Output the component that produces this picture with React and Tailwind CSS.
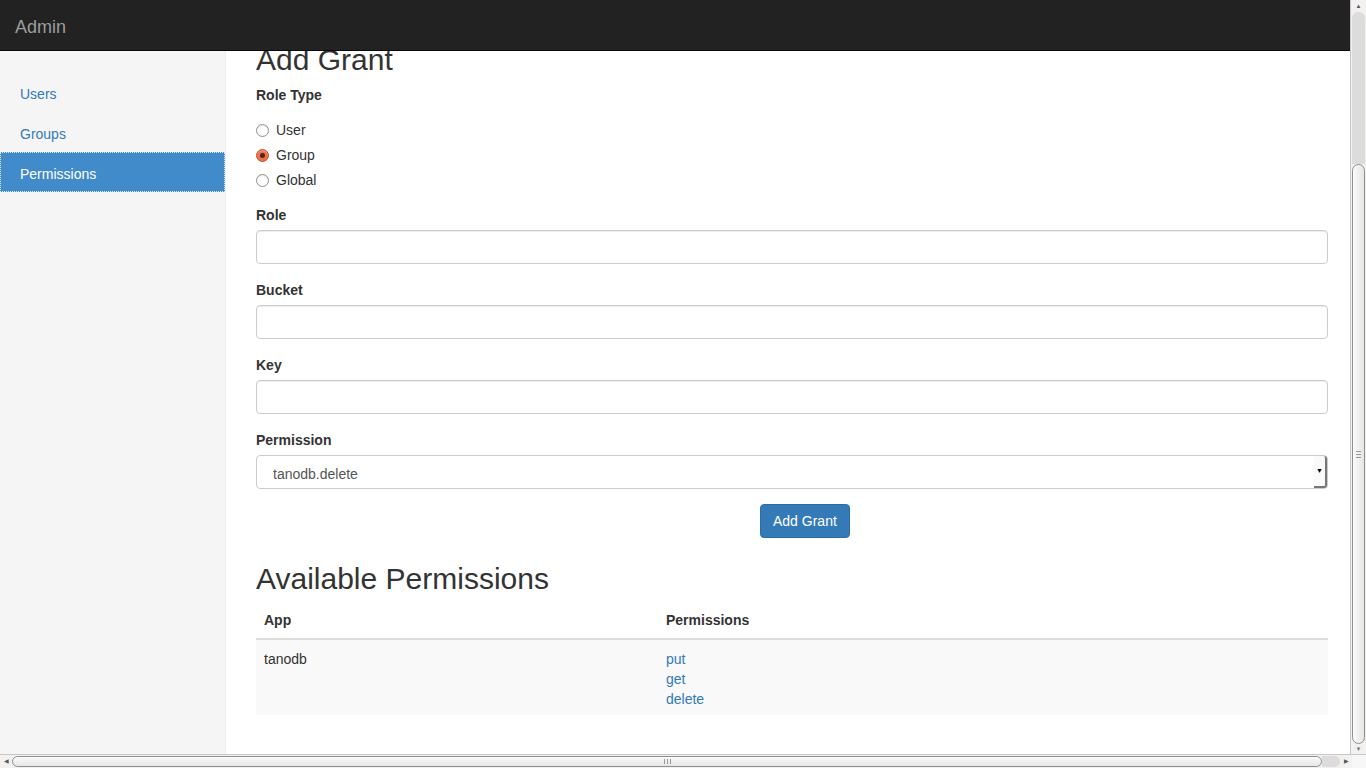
import React from "react";

const font = { fontFamily: '"Liberation Sans", Arial, sans-serif' };

function Radio({ label, checked }) {
    return (
        <div className="flex items-center h-[20px] mb-[5px]">
            {checked ? (
                <span className="w-[13px] h-[13px] rounded-full bg-[#e8734a] border border-[#b9532f] flex items-center justify-center shadow-[inset_0_1px_1px_rgba(255,255,255,0.4)]">
                    <span className="w-[5px] h-[5px] rounded-full bg-[#5a2414]" />
                </span>
            ) : (
                <span className="w-[13px] h-[13px] rounded-full bg-white border border-[#8f8f8f] shadow-[inset_0_1px_1px_rgba(0,0,0,0.1)]" />
            )}
            <span className="ml-[7px] text-[14px] text-[#333]">{label}</span>
        </div>
    );
}

function Field({ label, children }) {
    return (
        <div className="mb-[16px]">
            <div className="h-[20px] leading-[20px] text-[14px] font-bold text-[#333] mb-[5px]">{label}</div>
            {children}
        </div>
    );
}

function TextInput() {
    return (
        <div className="h-[34px] rounded-[4px] border border-[#ccc] bg-white shadow-[inset_0_1px_1px_rgba(0,0,0,0.075)]" />
    );
}

function VScrollbar() {
    return (
        <div className="w-[16px] h-full flex flex-col bg-[#f2f1f0] border-l border-[#c8c8c8]">
            <div className="h-[12px] flex items-center justify-center text-[6px] text-[#555]">▲</div>
            <div className="h-[152px] mx-[1px] bg-[#dcdcdc] rounded-t-[6px]" />
            <div className="flex-1 mx-[1px] rounded-[7px] border border-[#8f8f8f] bg-gradient-to-r from-[#fafafa] to-[#e6e6e6] flex items-center justify-center">
                <div className="flex flex-col gap-[2px]">
                    <div className="w-[5px] h-[1px] bg-[#999]" />
                    <div className="w-[5px] h-[1px] bg-[#999]" />
                    <div className="w-[5px] h-[1px] bg-[#999]" />
                </div>
            </div>
            <div className="h-[10px] flex items-center justify-center text-[6px] text-[#777]">▼</div>
        </div>
    );
}

function HScrollbar() {
    return (
        <div className="h-[14px] flex bg-[#f2f1f0] border-t border-[#c8c8c8]">
            <div className="w-[12px] flex items-center justify-center text-[6px] text-[#555]">◀</div>
            <div className="w-[1310px] my-[1px] rounded-[7px] border border-[#8f8f8f] bg-gradient-to-b from-[#fafafa] to-[#e6e6e6] flex items-center justify-center">
                <div className="flex gap-[2px]">
                    <div className="w-[1px] h-[5px] bg-[#999]" />
                    <div className="w-[1px] h-[5px] bg-[#999]" />
                    <div className="w-[1px] h-[5px] bg-[#999]" />
                </div>
            </div>
            <div className="w-[18px] my-[1px] bg-[#dcdcdc] rounded-r-[6px]" />
            <div className="w-[12px] flex items-center justify-center text-[6px] text-[#555]">▶</div>
            <div className="flex-1 bg-[#f7f7f7]" />
        </div>
    );
}

export default function App() {
    return (
        <div className="w-[1366px] h-[768px] flex flex-col overflow-hidden bg-white" style={font}>
            <div className="flex-1 flex min-h-0">
                <div className="w-[1350px] flex flex-col">
                    {/* Navbar */}
                    <div className="h-[51px] bg-[#222] border-b border-[#080808] flex items-center pt-[4px] px-[15px] shrink-0">
                        <span className="text-[18px] text-[#9d9d9d]">Admin</span>
                    </div>

                    <div className="flex-1 flex min-h-0">
                        {/* Sidebar */}
                        <div className="w-[226px] bg-[#f5f5f5] border-r border-[#eee] pt-[21px] shrink-0">
                            <a className="block h-[40px] pt-[12px] leading-[20px] px-[20px] text-[14px] text-[#337ab7]">Users</a>
                            <a className="block h-[40px] pt-[12px] leading-[20px] px-[20px] text-[14px] text-[#337ab7]">Groups</a>
                            <a className="block h-[40px] pt-[11px] leading-[20px] px-[19px] text-[14px] text-white bg-[#428bca] border border-dotted border-[#dfe8f2]">
                                Permissions
                            </a>
                        </div>

                        {/* Main */}
                        <div className="flex-1 overflow-hidden pl-[30px] pr-[22px]">
                            <div className="-mt-[8px]">
                                <h1 className="h-[33px] leading-[33px] text-[30px] text-[#333]">Add Grant</h1>
                                <div className="mt-[9px] h-[20px] leading-[20px] text-[14px] font-bold text-[#333]">Role Type</div>
                                <div className="mt-[15px] mb-[15px]">
                                    <Radio label="User" />
                                    <Radio label="Group" checked />
                                    <Radio label="Global" />
                                </div>

                                <Field label="Role">
                                    <TextInput />
                                </Field>
                                <Field label="Bucket">
                                    <TextInput />
                                </Field>
                                <Field label="Key">
                                    <TextInput />
                                </Field>
                                <Field label="Permission">
                                    <div className="h-[34px] rounded-[4px] border border-[#ccc] bg-white flex items-center">
                                        <span className="flex-1 pl-[16px] pt-[4px] text-[14px] text-[#555]">tanodb.delete</span>
                                        <div className="w-[13px] h-full flex items-center justify-center border-r-2 border-b-2 border-[#777] rounded-r-[3px] bg-[#fafafa]">
                                            <span className="text-[7px] text-black">▼</span>
                                        </div>
                                    </div>
                                </Field>

                                <div className="-mt-[1px] pl-[504px]">
                                    <button className="h-[34px] px-[12px] rounded-[4px] bg-[#337ab7] border border-[#2e6da4] text-white text-[14px]">
                                        Add Grant
                                    </button>
                                </div>

                                <h2 className="mt-[24px] h-[34px] leading-[34px] text-[30px] text-[#333]">Available Permissions</h2>

                                <table className="mt-[6px] w-full text-[14px] text-[#333] border-collapse">
                                    <thead>
                                        <tr className="border-b-2 border-[#ddd]">
                                            <th className="w-[402px] text-left font-bold px-[8px] py-[8px] leading-[20px]">App</th>
                                            <th className="text-left font-bold px-[8px] py-[8px] leading-[20px]">Permissions</th>
                                        </tr>
                                    </thead>
                                    <tbody>
                                        <tr className="bg-[#f9f9f9]">
                                            <td className="align-top px-[8px] pt-[9px] pb-[6px] leading-[20px]">tanodb</td>
                                            <td className="align-top px-[8px] pt-[9px] pb-[6px] leading-[20px] text-[#337ab7]">
                                                <div>put</div>
                                                <div>get</div>
                                                <div>delete</div>
                                            </td>
                                        </tr>
                                    </tbody>
                                </table>
                            </div>
                        </div>
                    </div>
                </div>
                <VScrollbar />
            </div>
            <HScrollbar />
        </div>
    );
}
